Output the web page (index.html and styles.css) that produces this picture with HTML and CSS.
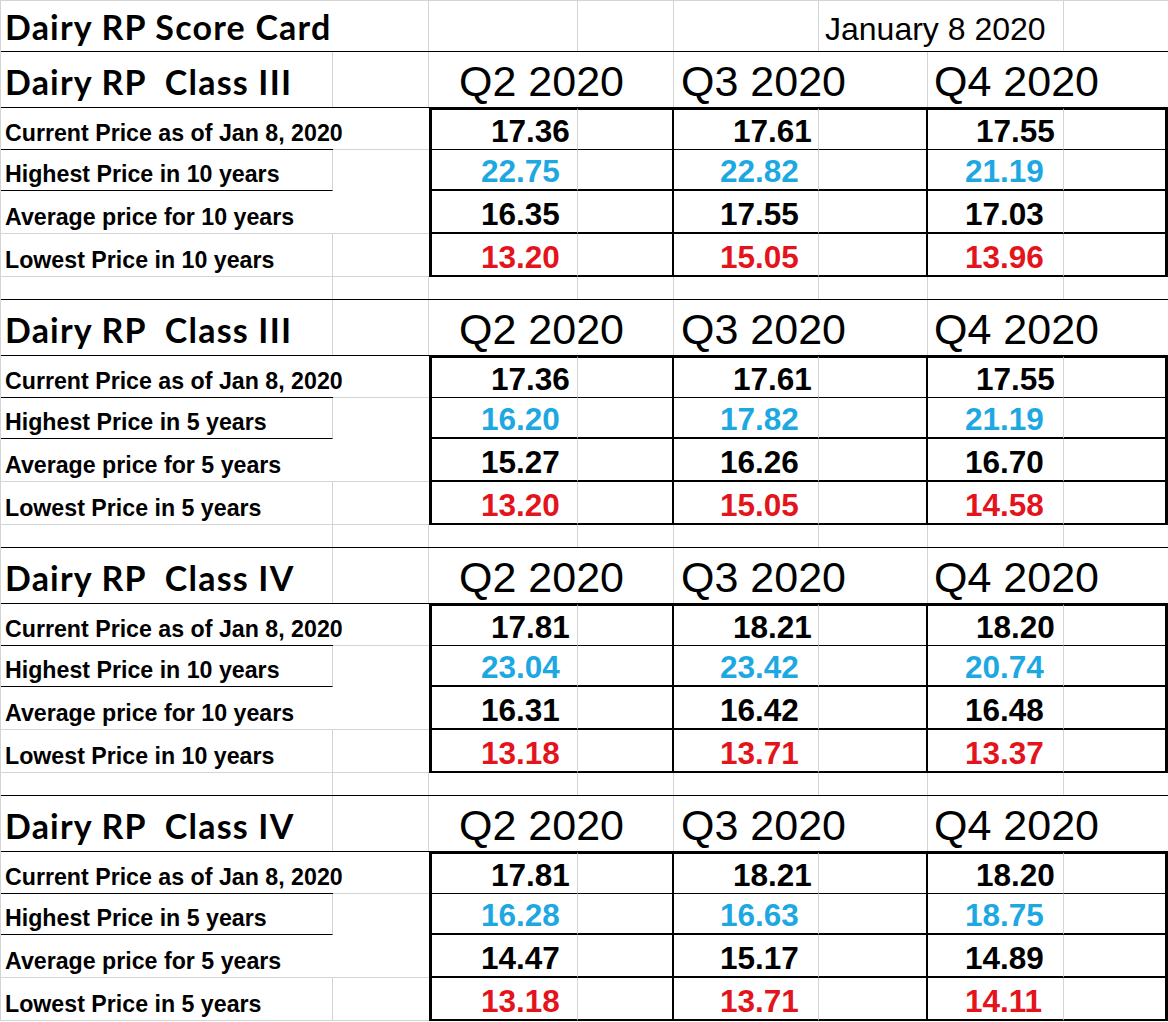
FILE: index.html
```html
<!DOCTYPE html>
<html lang="en">
<head>
<meta charset="utf-8">
<title>Dairy RP Score Card</title>
<link rel="stylesheet" href="styles.css">
</head>
<body>
<div class="sheet">
  <div class="row title-row">
    <div class="c ttl t-a">Dairy RP Score Card</div>
    <div class="c t-b"></div>
    <div class="c t-c"></div>
    <div class="c t-d"></div>
    <div class="c t-e"></div>
    <div class="c date t-f">January 8 2020</div>
    <div class="c t-g"></div>
    <div class="c t-h"></div>
  </div>

  <section class="block">
    <div class="row head">
      <div class="c ttl h-a">Dairy RP  Class III</div>
      <div class="c h-b"></div>
      <div class="c qtr h-c">Q2 2020</div>
      <div class="c h-d"></div>
      <div class="c qtr h-e">Q3 2020</div>
      <div class="c h-f"></div>
      <div class="c qtr h-g">Q4 2020</div>
      <div class="c h-h"></div>
    </div>
    <div class="row data r1">
      <div class="c lab">Current Price as of Jan 8, 2020</div><div class="c pad"></div>
      <div class="c bx v2">17.36</div><div class="c bx gd"></div>
      <div class="c bx v3">17.61</div><div class="c bx gf"></div>
      <div class="c bx v4">17.55</div><div class="c bx gh"></div>
    </div>
    <div class="row data r2">
      <div class="c lab">Highest Price in 10 years</div><div class="c pad"></div>
      <div class="c bx v2 hi">22.75</div><div class="c bx gd"></div>
      <div class="c bx v3 hi">22.82</div><div class="c bx gf"></div>
      <div class="c bx v4 hi">21.19</div><div class="c bx gh"></div>
    </div>
    <div class="row data r3">
      <div class="c lab">Average price for 10 years</div><div class="c pad"></div>
      <div class="c bx v2">16.35</div><div class="c bx gd"></div>
      <div class="c bx v3">17.55</div><div class="c bx gf"></div>
      <div class="c bx v4">17.03</div><div class="c bx gh"></div>
    </div>
    <div class="row data r4">
      <div class="c lab">Lowest Price in 10 years</div><div class="c pad"></div>
      <div class="c bx v2 lo">13.20</div><div class="c bx gd"></div>
      <div class="c bx v3 lo">15.05</div><div class="c bx gf"></div>
      <div class="c bx v4 lo">13.96</div><div class="c bx gh"></div>
    </div>
    <div class="row spacer">
      <div class="c"></div><div class="c"></div><div class="c"></div><div class="c"></div>
      <div class="c"></div><div class="c"></div><div class="c"></div><div class="c"></div>
    </div>
  </section>

  <section class="block">
    <div class="row head">
      <div class="c ttl h-a">Dairy RP  Class III</div>
      <div class="c h-b"></div>
      <div class="c qtr h-c">Q2 2020</div>
      <div class="c h-d"></div>
      <div class="c qtr h-e">Q3 2020</div>
      <div class="c h-f"></div>
      <div class="c qtr h-g">Q4 2020</div>
      <div class="c h-h"></div>
    </div>
    <div class="row data r1">
      <div class="c lab">Current Price as of Jan 8, 2020</div><div class="c pad"></div>
      <div class="c bx v2">17.36</div><div class="c bx gd"></div>
      <div class="c bx v3">17.61</div><div class="c bx gf"></div>
      <div class="c bx v4">17.55</div><div class="c bx gh"></div>
    </div>
    <div class="row data r2">
      <div class="c lab">Highest Price in 5 years</div><div class="c pad"></div>
      <div class="c bx v2 hi">16.20</div><div class="c bx gd"></div>
      <div class="c bx v3 hi">17.82</div><div class="c bx gf"></div>
      <div class="c bx v4 hi">21.19</div><div class="c bx gh"></div>
    </div>
    <div class="row data r3">
      <div class="c lab">Average price for 5 years</div><div class="c pad"></div>
      <div class="c bx v2">15.27</div><div class="c bx gd"></div>
      <div class="c bx v3">16.26</div><div class="c bx gf"></div>
      <div class="c bx v4">16.70</div><div class="c bx gh"></div>
    </div>
    <div class="row data r4">
      <div class="c lab">Lowest Price in 5 years</div><div class="c pad"></div>
      <div class="c bx v2 lo">13.20</div><div class="c bx gd"></div>
      <div class="c bx v3 lo">15.05</div><div class="c bx gf"></div>
      <div class="c bx v4 lo">14.58</div><div class="c bx gh"></div>
    </div>
    <div class="row spacer">
      <div class="c"></div><div class="c"></div><div class="c"></div><div class="c"></div>
      <div class="c"></div><div class="c"></div><div class="c"></div><div class="c"></div>
    </div>
  </section>

  <section class="block">
    <div class="row head">
      <div class="c ttl h-a">Dairy RP  Class IV</div>
      <div class="c h-b"></div>
      <div class="c qtr h-c">Q2 2020</div>
      <div class="c h-d"></div>
      <div class="c qtr h-e">Q3 2020</div>
      <div class="c h-f"></div>
      <div class="c qtr h-g">Q4 2020</div>
      <div class="c h-h"></div>
    </div>
    <div class="row data r1">
      <div class="c lab">Current Price as of Jan 8, 2020</div><div class="c pad"></div>
      <div class="c bx v2">17.81</div><div class="c bx gd"></div>
      <div class="c bx v3">18.21</div><div class="c bx gf"></div>
      <div class="c bx v4">18.20</div><div class="c bx gh"></div>
    </div>
    <div class="row data r2">
      <div class="c lab">Highest Price in 10 years</div><div class="c pad"></div>
      <div class="c bx v2 hi">23.04</div><div class="c bx gd"></div>
      <div class="c bx v3 hi">23.42</div><div class="c bx gf"></div>
      <div class="c bx v4 hi">20.74</div><div class="c bx gh"></div>
    </div>
    <div class="row data r3">
      <div class="c lab">Average price for 10 years</div><div class="c pad"></div>
      <div class="c bx v2">16.31</div><div class="c bx gd"></div>
      <div class="c bx v3">16.42</div><div class="c bx gf"></div>
      <div class="c bx v4">16.48</div><div class="c bx gh"></div>
    </div>
    <div class="row data r4">
      <div class="c lab">Lowest Price in 10 years</div><div class="c pad"></div>
      <div class="c bx v2 lo">13.18</div><div class="c bx gd"></div>
      <div class="c bx v3 lo">13.71</div><div class="c bx gf"></div>
      <div class="c bx v4 lo">13.37</div><div class="c bx gh"></div>
    </div>
    <div class="row spacer">
      <div class="c"></div><div class="c"></div><div class="c"></div><div class="c"></div>
      <div class="c"></div><div class="c"></div><div class="c"></div><div class="c"></div>
    </div>
  </section>

  <section class="block">
    <div class="row head">
      <div class="c ttl h-a">Dairy RP  Class IV</div>
      <div class="c h-b"></div>
      <div class="c qtr h-c">Q2 2020</div>
      <div class="c h-d"></div>
      <div class="c qtr h-e">Q3 2020</div>
      <div class="c h-f"></div>
      <div class="c qtr h-g">Q4 2020</div>
      <div class="c h-h"></div>
    </div>
    <div class="row data r1">
      <div class="c lab">Current Price as of Jan 8, 2020</div><div class="c pad"></div>
      <div class="c bx v2">17.81</div><div class="c bx gd"></div>
      <div class="c bx v3">18.21</div><div class="c bx gf"></div>
      <div class="c bx v4">18.20</div><div class="c bx gh"></div>
    </div>
    <div class="row data r2">
      <div class="c lab">Highest Price in 5 years</div><div class="c pad"></div>
      <div class="c bx v2 hi">16.28</div><div class="c bx gd"></div>
      <div class="c bx v3 hi">16.63</div><div class="c bx gf"></div>
      <div class="c bx v4 hi">18.75</div><div class="c bx gh"></div>
    </div>
    <div class="row data r3">
      <div class="c lab">Average price for 5 years</div><div class="c pad"></div>
      <div class="c bx v2">14.47</div><div class="c bx gd"></div>
      <div class="c bx v3">15.17</div><div class="c bx gf"></div>
      <div class="c bx v4">14.89</div><div class="c bx gh"></div>
    </div>
    <div class="row data r4">
      <div class="c lab">Lowest Price in 5 years</div><div class="c pad"></div>
      <div class="c bx v2 lo">13.18</div><div class="c bx gd"></div>
      <div class="c bx v3 lo">13.71</div><div class="c bx gf"></div>
      <div class="c bx v4 lo">14.11</div><div class="c bx gh"></div>
    </div>
  </section>
</div>
</body>
</html>
```

FILE: styles.css
```css
* {
  box-sizing: border-box;
}

html, body {
  margin: 0;
  padding: 0;
  background: #ffffff;
}

.sheet {
  width: 1168px;
  border-top: 1px solid #d4d4d4;
  border-left: 1px solid #d4d4d4;
  font-family: "Liberation Sans", Arial, sans-serif;
  color: #000000;
}

.row {
  display: grid;
  grid-template-columns: 332px 96px 149px 96px 145px 109px 136px 104px;
}

.c {
  display: flex;
  align-items: flex-end;
  white-space: pre;
  min-width: 0;
  line-height: 1;
}

/* ---------- title row ---------- */
.title-row {
  height: 51px;
  border-bottom: 1px solid #000;
}

.ttl {
  font-family: Lato, "Open Sans", sans-serif;
  font-weight: 700;
  font-size: 34px;
  letter-spacing: 1.2px;
  padding-left: 4px;
}

.title-row .ttl {
  padding-bottom: 7px;
}

.t-b, .t-c, .t-d, .t-e, .t-g {
  border-right: 1px solid #d4d4d4;
}

.date {
  font-size: 32px;
  padding-left: 6px;
  padding-bottom: 6px;
}

/* ---------- section header row ---------- */
.head {
  height: 56px;
  border-bottom: 1px solid #000;
}

.head .ttl {
  padding-bottom: 8px;
}

.h-a, .h-b, .h-d, .h-f {
  border-right: 1px solid #d4d4d4;
}

.qtr {
  font-size: 43px;
  padding-bottom: 4px;
}

.h-c { padding-left: 30px; }
.h-e { padding-left: 7px; }
.h-g { padding-left: 6px; }

/* ---------- data rows ---------- */
.r1 { height: 42px; }
.r2 { height: 41px; }
.r3 { height: 43px; }
.r4 { height: 43px; }

.lab {
  font-weight: 700;
  font-size: 23.2px;
  padding-left: 4px;
  padding-bottom: 4px;
}

.r1 .lab { border-bottom: 1px solid #000; }
.r1 .pad { border-bottom: 1px solid #d4d4d4; }
.r2 .lab { border-bottom: 1px solid #000; border-right: 1px solid #d4d4d4; }
.r3 .lab { border-bottom: 1px solid #d4d4d4; }
.r3 .pad { border-bottom: 1px solid #d4d4d4; }
.r4 .lab { border-bottom: 1px solid #d4d4d4; border-right: 1px solid #d4d4d4; }
.r4 .pad { border-bottom: 1px solid #d4d4d4; }

/* the framed box of prices */
.r1 .bx { border-top: 2px solid #000; border-bottom: 1px solid #000; }
.r2 .bx, .r3 .bx, .r4 .bx { border-bottom: 2px solid #000; }

.v2 { border-left: 3px solid #000; border-right: 1px solid #d4d4d4; padding-left: 49px; }
.gd { border-right: 2px solid #000; }
.v3 { border-right: 1px solid #d4d4d4; padding-left: 46px; }
.gf { border-right: 2px solid #000; }
.v4 { border-right: 1px solid #d4d4d4; padding-left: 37px; }
.gh { border-right: 3px solid #000; }

.v2, .v3, .v4 {
  font-weight: 700;
  font-size: 31.5px;
  padding-bottom: 2px;
}

.r1 .v2 { padding-left: 59px; }
.r1 .v3 { padding-left: 59px; }
.r1 .v4 { padding-left: 48px; }

.hi { color: #1da8e2; }
.lo { color: #e3141b; }

/* ---------- blank spacer row ---------- */
.spacer {
  height: 23px;
  border-bottom: 1px solid #000;
}

.spacer .c {
  border-right: 1px solid #d4d4d4;
}

.spacer .c:last-child {
  border-right: none;
}
```
